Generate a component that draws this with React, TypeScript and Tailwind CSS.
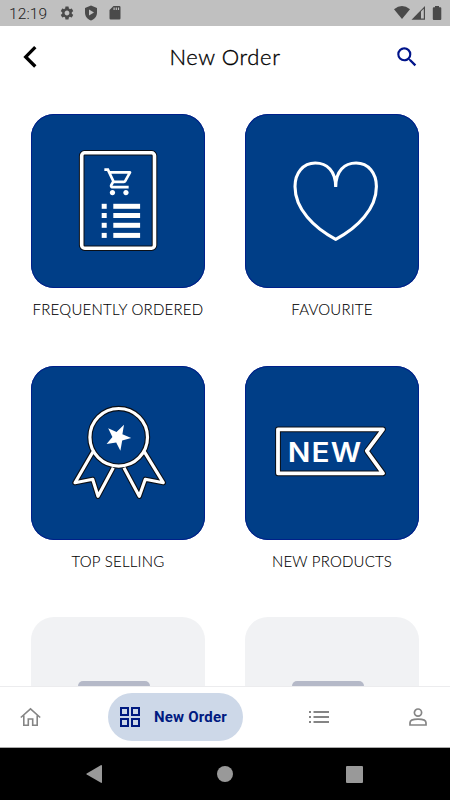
import React from 'react';
import { MdSearch, MdSettings } from 'react-icons/md';

const OUTLINE = '#0b0f16';

const ListIcon: React.FC = () => (
    <svg className="h-full w-full" viewBox="1 1 174 174" fill="none">
        <rect x="51.7" y="39.8" width="72.8" height="95.4" rx="3" stroke={OUTLINE} strokeWidth="5.6" />
        <rect x="51.7" y="39.8" width="72.8" height="95.4" rx="3" stroke="#fff" strokeWidth="3.6" />
        <path
            transform="translate(73 52.6) scale(1.35)"
            fill="#fff"
            d="M15.55 13c.75 0 1.41-.41 1.75-1.03l3.58-6.49A.996.996 0 0 0 20.01 4H5.21l-.94-2H1v2h2l3.6 7.59-1.35 2.44C4.52 15.37 5.48 17 7 17h12v-2H7l1.1-2h7.45zM6.16 6h12.15l-2.76 5H8.53L6.16 6zM7 18c-1.1 0-1.99.9-1.99 2S5.9 22 7 22s2-.9 2-2-.9-2-2-2zm10 0c-1.1 0-1.99.9-1.99 2s.89 2 1.99 2 2-.9 2-2-.9-2-2-2z"
        />
        {[90.8, 100, 109.8, 119.9].map((y) => (
            <g key={y} fill="#fff">
                <rect x="71.7" y={y} width="5" height="5" />
                <rect x="83.3" y={y} width="26.8" height="5" />
            </g>
        ))}
    </svg>
);

const HeartIcon: React.FC = () => (
    <svg className="h-full w-full" viewBox="0 1 174 174" fill="none">
        <path
            d="M90.7 74C90.7 58 82 50 70.3 50C58 50 50 60 50 73.5C50 96 69 115 90.7 126.3C112.4 115 131.4 96 131.4 73.5C131.4 60 123.4 50 111.1 50C99.4 50 90.7 58 90.7 74"
            stroke="#fff"
            strokeWidth="3.1"
        />
    </svg>
);

const MedalIcon: React.FC = () => {
    const ribbons = 'M63 86.7L45 117.7L62.7 114.3L68 131.3L83.3 102.7M114.3 86.7L133.3 117.7L115.3 114.3L109.3 131.3L94 102.7';

    return (
        <svg className="h-full w-full" viewBox="1 1 174 174" fill="none" strokeLinejoin="round">
            <path d={ribbons} stroke={OUTLINE} strokeWidth="5.4" />
            <circle cx="88.7" cy="72.3" r="28.8" stroke={OUTLINE} strokeWidth="5.4" />
            <path d={ribbons} stroke="#fff" strokeWidth="3.2" />
            <circle cx="88.7" cy="72.3" r="28.8" stroke="#fff" strokeWidth="3.2" />
            <path d="M94 59.7L92.4 69.3L101.2 73L92.2 75.4L90.4 85.8L86.2 77.6L76.6 79.1L82.4 72L78.2 63.2L86.5 67Z" fill="#fff" />
        </svg>
    );
};

const NewIcon: React.FC = () => {
    const banner = 'M33 64.3H138L121.8 86L138 108.3H33Z';

    return (
        <svg className="h-full w-full" viewBox="0 1 174 174" fill="none" strokeLinejoin="round">
            <path d={banner} stroke={OUTLINE} strokeWidth="5.8" />
            <path d={banner} stroke="#fff" strokeWidth="3.8" />
            <text x="42.8" y="97" textLength="74.5" lengthAdjust="spacingAndGlyphs" fill="#fff" className="font-['Inter',sans-serif] text-[26.5px] font-semibold tracking-[1px]">NEW</text>
        </svg>
    );
};

const categories = [
    { label: 'FREQUENTLY ORDERED', Icon: ListIcon, tracking: 'tracking-[0.25px]' },
    { label: 'FAVOURITE', Icon: HeartIcon, tracking: 'tracking-[0.2px]' },
    { label: 'TOP SELLING', Icon: MedalIcon, tracking: 'tracking-[0.25px]' },
    { label: 'NEW PRODUCTS', Icon: NewIcon, tracking: 'tracking-[0.2px]' },
];

const StatusBar: React.FC = () => (
    <div className="flex h-[26px] shrink-0 items-center justify-between bg-[#c0c0c0] pr-2 pl-[9px] text-[#4a4a4a]">
        <div className="flex items-center">
            <span className="mt-0.5 w-[50px] font-['Roboto',sans-serif] text-[15.5px] leading-[26px] font-light tracking-[0.1px] text-[#222]">12:19</span>
            <MdSettings className="size-4" />
            <svg className="ml-[9px] h-4 w-[14px]" viewBox="0 0 14 16" fill="currentColor">
                <path fillRule="evenodd" d="M7 .5L13 3V7.5C13 11.3 10.5 14.4 7 15.5C3.5 14.4 1 11.3 1 7.5V3ZM5 4.5V10.5L10 7.5Z" />
            </svg>
            <svg className="ml-[11px] h-4 w-3" viewBox="0 0 12 16" fill="currentColor">
                <path fillRule="evenodd" d="M4.5 1H10.3Q11.5 1 11.5 2.2V13.3Q11.5 14.5 10.3 14.5H1.7Q.5 14.5 .5 13.3V5ZM4.5 2.5V5H5.7V2.5ZM6.7 2.5V5H7.9V2.5ZM8.9 2.5V5H10.1V2.5Z" />
            </svg>
        </div>
        <svg className="h-4 w-12" viewBox="0 0 48 16" fill="currentColor">
            <path d="M0 4.2Q8 -2.2 16 4.2L8 14Z" />
            <path d="M31 1V14.7H17.5Z" />
            <path d="M27 6.5L29.8 3.8V13.5H27Z" fill="#c0c0c0" />
            <path d="M41 1H45V2.3H46.3Q47.3 2.3 47.3 3.3V14Q47.3 15 46.3 15H39.8Q38.8 15 38.8 14V3.3Q38.8 2.3 39.8 2.3H41Z" />
        </svg>
    </div>
);

const Header: React.FC = () => (
    <header className="grid h-[62px] shrink-0 grid-cols-3 items-center px-[22px] font-['Lato',sans-serif]">
        <button aria-label="Back" className="w-4">
            <svg className="h-6 w-4" viewBox="0 0 16 24" fill="none">
                <path d="M13.3 2.2L3.7 11.9L13.3 21.5" stroke="#000" strokeWidth="3.3" />
            </svg>
        </button>
        <h1 className="mb-0.5 text-center text-[22px] font-light whitespace-nowrap tracking-[0.6px] text-black [-webkit-text-stroke:0.35px_#000]">New Order</h1>
        <button aria-label="Search" className="mr-[8px] mb-px justify-self-end">
            <MdSearch className="size-[26px] text-[#00148a]" />
        </button>
    </header>
);

const BottomNav: React.FC = () => (
    <nav className="flex h-[62px] shrink-0 items-center border-t border-b border-t-[#ececee] border-b-[#aaa] bg-white px-5 text-[#858585]">
        <svg className="h-5 w-[22px]" viewBox="0 0 22 20" fill="none" stroke="currentColor" strokeWidth="1.6">
            <path d="M.8 10.5L10.5 1.8L20.2 10.5M3.8 8.5V18.2H8.3V12H12.7V18.2H17.2V8.5" />
        </svg>
        <div className="ml-[66px] flex h-12 w-[135px] items-center rounded-full bg-[#cdd8e8] pl-3 text-[#001a80]">
            <svg className="size-5" viewBox="0 0 20 20" fill="none" stroke="currentColor" strokeWidth="2">
                <path d="M1 1H8V8H1ZM12 1H19V8H12ZM1 12H8V19H1ZM12 12H19V19H12Z" />
            </svg>
            <span className="ml-[14px] font-['Roboto',sans-serif] text-[15px] font-bold tracking-[0.2px] whitespace-nowrap">New Order</span>
        </div>
        <svg className="ml-[66px] h-3 w-5" viewBox="0 0 20 12" fill="currentColor">
            <path d="M0 0H2V2H0ZM0 5H2V7H0ZM0 10H2V12H0ZM4.5 0H20V2H4.5ZM4.5 5H20V7H4.5ZM4.5 10H20V12H4.5Z" />
        </svg>
        <svg className="ml-20 h-[18px] w-[18px]" viewBox="0 0 18 18" fill="none" stroke="currentColor" strokeWidth="1.7">
            <circle cx="9" cy="4.6" r="3.6" />
            <path d="M1 17V14.8Q1 11.2 9 11.2Q17 11.2 17 14.8V17Z" />
        </svg>
    </nav>
);

const SystemNav: React.FC = () => (
    <div className="flex flex-1 items-center justify-between bg-black pr-[87px] pl-[86px]">
        <svg className="h-[18px] w-4" viewBox="0 0 16 18" fill="#999"><path d="M15.2 0Q16 0 16 1V17Q16 18.3 15 17.8L.7 9.5Q0 9 .7 8.5Z" /></svg>
        <div className="ml-[2px] size-4 rounded-full bg-[#999]" />
        <div className="size-[17px] rounded-[1px] bg-[#999]" />
    </div>
);

const App: React.FC = () => {
    return (
        <div className="flex h-[800px] w-[450px] flex-col overflow-hidden bg-white">
            <StatusBar />
            <Header />
            <main className="grid h-[598px] shrink-0 auto-rows-[251.7px] grid-cols-[174px_174px] gap-x-10 overflow-hidden pt-[26px] pl-[31px]">
                {categories.map(({ label, Icon, tracking }) => (
                    <section key={label} className="flex flex-col items-center">
                        <div className="size-[174px] rounded-[23px] bg-[#003e87] shadow-[inset_0_0_0_1px_#00208a]">
                            <Icon />
                        </div>
                        <p className={`mt-[11px] font-['Lato',sans-serif] text-[15px] leading-5 font-light whitespace-nowrap text-black [-webkit-text-stroke:0.1px_#000] ${tracking}`}>{label}</p>
                    </section>
                ))}
                {['left', 'right'].map((side) => (
                    <div key={side} className="h-[175px] rounded-[23px] bg-[#f1f2f4] pt-[64px] pl-[47px]">
                        <div className="h-20 w-[72px] rounded-[5px] bg-[#b5b9c8]" />
                    </div>
                ))}
            </main>
            <BottomNav />
            <SystemNav />
        </div>
    );
};

export default App;
